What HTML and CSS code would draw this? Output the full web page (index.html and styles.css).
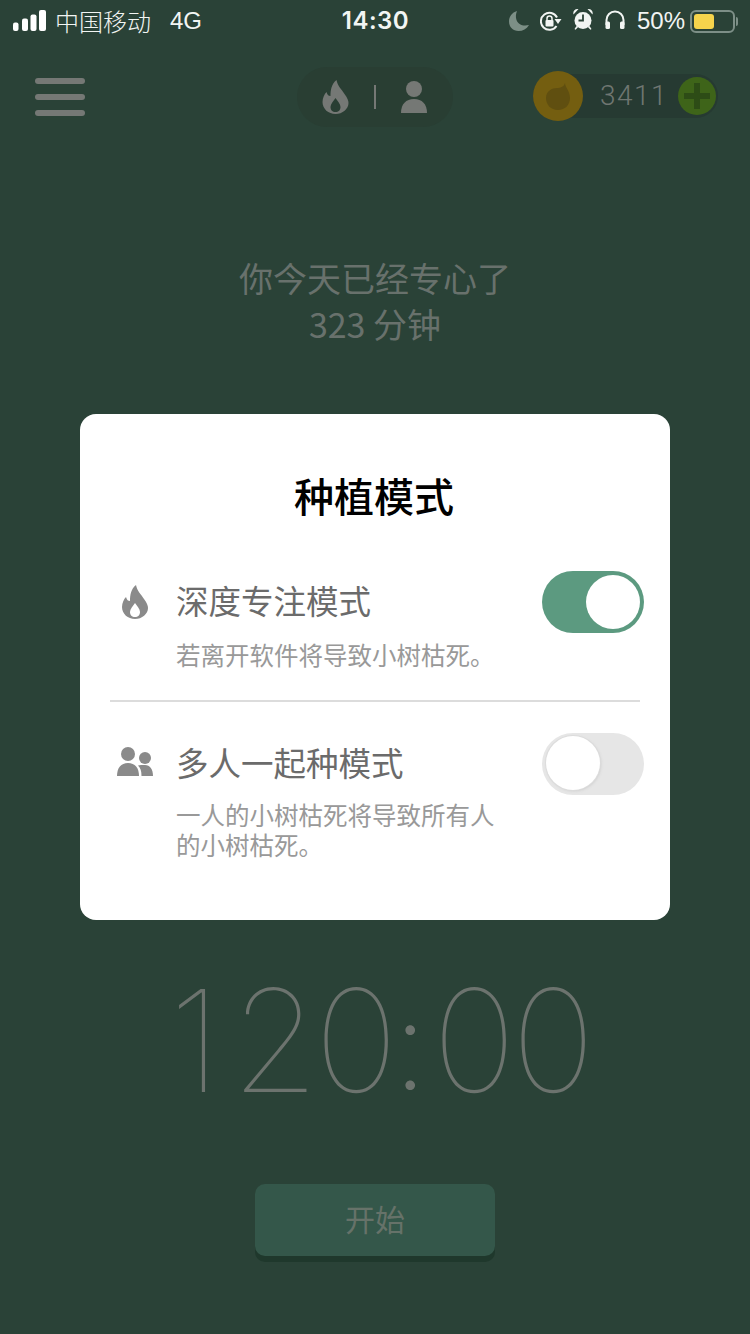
FILE: index.html
```html
<!DOCTYPE html>
<html lang="zh">
<head>
<meta charset="utf-8">
<title>种植模式</title>
<link rel="stylesheet" href="styles.css">
</head>
<body>
<div class="screen">
  <div class="status">
    <div class="status-left">
      <svg class="signal" viewBox="0 0 33 22" width="33" height="22"><rect x="0" y="12.500" width="5.500" height="8.500" rx="2"/><rect x="9" y="8.500" width="6" height="12.500" rx="2"/><rect x="17.500" y="4.500" width="6" height="16.500" rx="2"/><rect x="26" y="0" width="7" height="21" rx="2"/></svg>
      <span class="carrier">中国移动</span>
      <span class="net">4G</span>
    </div>
    <div class="clock">14:30</div>
    <div class="status-right">
      <svg class="moon" viewBox="0 0 20 20" width="20" height="20"><path d="M8 0C3 1.500 0 5.500 0 10.500C0 16 4 20 9.500 20C14 20 17.500 18 20 14C14 15.500 9 13.500 7.500 9C6.500 6 6.800 3 8 0Z"/></svg>
      <svg class="rot" viewBox="0 0 22 22" width="22" height="22"><path class="line" d="M17 7.500A8.500 8.500 0 1 0 16.500 16"/><path class="solid" d="M14.500 9h7l-3.500 5z"/><rect class="solid" x="5.500" y="10" width="8" height="6.500" rx="1"/><path class="line thin" d="M7 10V8.500a2.500 2.500 0 0 1 5 0V10"/></svg>
      <svg class="alarm" viewBox="0 0 20 22" width="20" height="22"><circle class="solid" cx="10" cy="12.500" r="8.500"/><path class="solid" d="M0.500 6.500C-0.500 3 2 0.300 5.500 1zM19.500 6.500C20.500 3 18 0.300 14.500 1z"/><path class="solid" d="M3.500 18l-2 3 1 0.800 2.500-2.500zM16.500 18l2 3-1 .8-2.500-2.500z"/><path class="hand" d="M10 6.500v6H5.500"/></svg>
      <svg class="phones" viewBox="0 0 20 20" width="20" height="20"><path class="line" d="M1.500 15V10a8.500 8.500 0 0 1 17 0v5"/><rect class="solid" x="0.500" y="11.500" width="4.500" height="7.500" rx="1.500"/><rect class="solid" x="15" y="11.500" width="4.500" height="7.500" rx="1.500"/></svg>
      <span class="pct">50%</span>
      <div class="battery"><div class="battery-body"><div class="battery-fill"></div></div><div class="battery-nub"></div></div>
    </div>
  </div>

  <header class="top">
    <div class="menu"><span></span><span></span><span></span></div>
    <div class="mode">
      <svg class="flame-top" viewBox="0 0 26 34" width="27" height="34"><path fill-rule="evenodd" d="M14 0C15 6 19 9 22 14C25 18 26 21 26 23C26 29 20 34 13 34C6 34 0 29 0 22C0 18 2 14 4 12C5 15 6 16 8 16C8 10 9 4 14 0ZM13 18C11 21 8 24 8 27C8 30 10 32 13 32C16 32 18 30 18 27C18 24 15 21 13 18Z"/></svg>
      <span class="mode-sep"></span>
      <svg class="person-top" viewBox="0 0 26 32" width="26" height="32"><circle cx="13" cy="8" r="8"/><path d="M0 32C0 23 5 18 13 18C21 18 26 23 26 32Z"/></svg>
    </div>
    <div class="coins">
      <div class="coin"><svg viewBox="0 0 24 27" width="24" height="27"><path d="M19 0C19 4 24 8 24 15C24 22 19 27 12 27C5 27 0 22 0 15C0 8 6 5 11 5C14 5 18 4 19 0Z"/></svg></div>
      <span class="coin-count">3411</span>
      <div class="coin-add"><svg viewBox="0 0 26 26" width="26" height="26"><path d="M10 0h6v10h10v6H16v10h-6V16H0v-6h10z"/></svg></div>
    </div>
  </header>

  <div class="greeting">
    <p>你今天已经专心了</p>
    <p>323 分钟</p>
  </div>

  <div class="timer"><span class="t-one">1</span><span class="t-digit">2</span><span class="t-digit">0</span><span class="t-colon">:</span><span class="t-digit">0</span><span class="t-last">0</span></div>

  <div class="start">开始</div>

  <div class="overlay">
    <div class="dialog">
      <h1 class="dialog-title">种植模式</h1>
      <div class="option option-first">
        <div class="option-icon">
          <svg viewBox="0 0 26 34" width="26" height="34"><path fill-rule="evenodd" d="M14 0C15 6 19 9 22 14C25 18 26 21 26 23C26 29 20 34 13 34C6 34 0 29 0 22C0 18 2 14 4 12C5 15 6 16 8 16C8 10 9 4 14 0ZM13 18C11 21 8 24 8 27C8 30 10 32 13 32C16 32 18 30 18 27C18 24 15 21 13 18Z"/></svg>
        </div>
        <div class="option-text">
          <div class="option-name">深度专注模式</div>
          <div class="option-desc">若离开软件将导致小树枯死。</div>
        </div>
        <div class="switch switch-on"><span class="knob"></span></div>
      </div>
      <div class="divider"></div>
      <div class="option option-second">
        <div class="option-icon">
          <svg viewBox="0 0 36 29" width="36" height="29"><circle cx="11" cy="7" r="7"/><circle cx="28" cy="11" r="6"/><path d="M0 29C0 21 4 16 11 16C18 16 22 21 22 29Z"/><path d="M24.500 29C24.500 24 23.500 21 21 18.500C23 17.500 25 18 28 18C33 18 36 22 36 29Z"/></svg>
        </div>
        <div class="option-text">
          <div class="option-name">多人一起种模式</div>
          <div class="option-desc">一人的小树枯死将导致所有人<br>的小树枯死。</div>
        </div>
        <div class="switch switch-off"><span class="knob"></span></div>
      </div>
    </div>
  </div>
</div>
</body>
</html>
```
FILE: styles.css
```css
* { box-sizing: border-box; }
html, body { margin: 0; padding: 0; }
body { font-family: "Noto Sans CJK SC", "Liberation Sans", sans-serif; }
p, h1 { margin: 0; }

.screen {
  position: relative;
  width: 750px;
  height: 1334px;
  overflow: hidden;
  background: #2a4237;
  display: flex;
  flex-direction: column;
  align-items: stretch;
}

/* status bar */
.status {
  height: 42px;
  padding: 0 12px 0 13px;
  display: grid;
  grid-template-columns: 1fr auto 1fr;
  align-items: center;
  color: #f2f5f3;
}
.status-left { display: flex; align-items: center; }
.signal { fill: #fff; margin-right: 9px; }
.carrier { font-size: 24px; line-height: 42px; font-weight: 300; }
.net { font: 24px/42px "Liberation Sans", sans-serif; margin-left: 19px; }
.clock { font: 600 24px/42px "Inter", "Liberation Sans", sans-serif; letter-spacing: 0.500px; }
.status-right { display: flex; align-items: center; justify-content: flex-end; }
.moon { fill: #7c8f86; margin-right: 11px; }
.rot { margin-right: 11px; }
.alarm { margin-right: 12px; margin-bottom: 4px; }
.phones { margin-right: 12px; margin-bottom: 2px; }
.line { fill: none; stroke: #f2f5f3; stroke-width: 2; }
.line.thin { stroke-width: 1.500; }
.solid { fill: #f2f5f3; }
.hand { fill: none; stroke: #2a4237; stroke-width: 1.800; }
.pct { font: 24px/42px "Liberation Sans", sans-serif; margin-right: 5px; }
.battery { display: flex; align-items: center; }
.battery-body {
  width: 45px;
  height: 23px;
  border: 2px solid #7d8f87;
  border-radius: 6px;
  padding: 2px;
}
.battery-fill { width: 20px; height: 15px; background: #f6d44c; border-radius: 3px; }
.battery-nub { width: 2px; height: 9px; background: #7d8f87; margin-left: 1px; border-radius: 0 2px 2px 0; }

/* top bar */
.top {
  margin-top: 25px;
  height: 60px;
  padding: 0 32px;
  display: grid;
  grid-template-columns: 1fr auto 1fr;
  align-items: center;
}
.menu { display: flex; flex-direction: column; gap: 10.500px; margin-left: 3px; }
.menu span { display: block; width: 50px; height: 5.500px; border-radius: 3px; background: #757875; }
.mode {
  width: 156px;
  height: 60px;
  border-radius: 30px;
  background: #293e33;
  display: flex;
  align-items: center;
  justify-content: space-between;
  padding: 0 26px 0 25px;
}
.flame-top, .person-top { fill: #757875; }
.mode-sep { width: 2px; height: 24px; background: #757875; }
.coins {
  justify-self: end;
  position: relative;
  width: 185px;
  height: 44px;
  margin-top: -2px;
  padding-left: 67px;
  display: flex;
  align-items: center;
  background: #263a32;
  border-radius: 22px;
}
.coin {
  position: absolute;
  left: 0;
  top: -3px;
  width: 50px;
  height: 50px;
  border-radius: 50%;
  background: #745e10;
  display: flex;
  align-items: center;
  justify-content: center;
}
.coin svg { fill: #604f10; }
.coin-count {
  font: 300 28px/44px "Roboto", "Liberation Sans", sans-serif;
  letter-spacing: 1.500px;
  color: #6f7671;
}
.coin-add {
  position: absolute;
  right: 2px;
  top: 3px;
  width: 38px;
  height: 38px;
  border-radius: 50%;
  background: #3e6419;
  display: flex;
  align-items: center;
  justify-content: center;
}
.coin-add svg { fill: #2d4c16; }

/* background content */
.greeting {
  margin-top: 128px;
  text-align: center;
  font-size: 34px;
  line-height: 46px;
  font-weight: 400;
  color: #68716c;
}
.timer {
  margin-top: 623px;
  height: 140px;
  padding-left: 14px;
  text-align: center;
  font: 100 142px/140px "Inter", "Roboto", sans-serif;
  color: #6c736e;
  white-space: nowrap;
}
.t-one { letter-spacing: 10px; }
.t-digit { letter-spacing: -5px; }
.t-colon { font-size: 123px; font-weight: 150; vertical-align: 3px; letter-spacing: 5px; }
.t-last { letter-spacing: 0; }
.start {
  align-self: center;
  margin-top: 74px;
  width: 240px;
  height: 72px;
  border-radius: 10px;
  background: #34574a;
  box-shadow: 0 6px 0 #1f382c;
  text-align: center;
  font-size: 30px;
  line-height: 68px;
  font-weight: 400;
  color: #667269;
}

/* dialog */
.overlay {
  position: absolute;
  inset: 0;
  display: flex;
  align-items: center;
  justify-content: center;
}
.dialog {
  width: 590px;
  height: 506px;
  background: #fff;
  border-radius: 16px;
  padding: 0 30px;
}
.dialog-title {
  margin-top: 52px;
  text-align: center;
  text-indent: -2px;
  font-size: 40px;
  line-height: 58px;
  font-weight: 500;
  color: #000;
}
.option {
  display: grid;
  grid-template-columns: 50px 1fr auto;
  column-gap: 17px;
  align-items: start;
}
.option-first { margin-top: 47px; }
.option-second { margin-top: 31px; }
.option-icon { display: flex; justify-content: center; fill: #8a8a8a; padding-top: 14px; }
.option-text { padding-top: 6px; }
.option-name { font-size: 32.500px; line-height: 46px; color: #6b6b6b; margin-left: -1px; }
.option-desc { margin-top: 17px; margin-left: -1px; font-size: 24.500px; line-height: 30px; color: #999; }
.option-second .option-desc { margin-top: 15px; }
.divider { margin-top: 30px; height: 2px; background: #dcdcdc; }
.switch {
  position: relative;
  width: 102px;
  height: 62px;
  margin-right: -4px;
  border-radius: 31px;
}
.switch-on { background: #5c9a80; }
.switch-off { background: #e6e6e6; }
.knob {
  position: absolute;
  top: 4px;
  width: 54px;
  height: 54px;
  border-radius: 50%;
  background: #fff;
}
.switch-on .knob { right: 4px; }
.switch-off .knob { left: 4px; top: 3px; box-shadow: 0 0 0 1px #dcdcdc, 1px 1px 3px #ccc; }
```
